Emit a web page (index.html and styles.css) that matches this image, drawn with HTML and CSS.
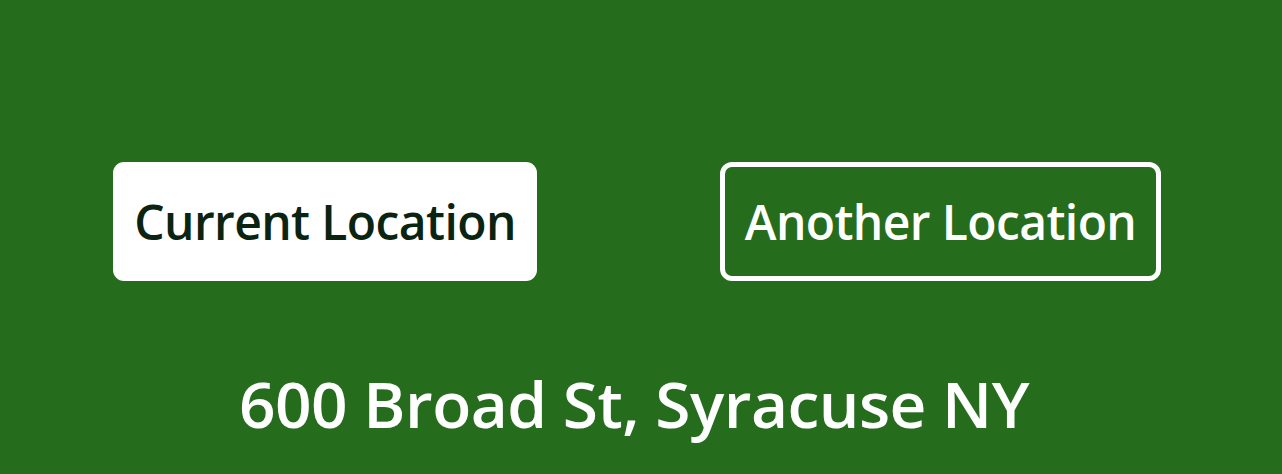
FILE: index.html
```html
<!DOCTYPE html>
<html lang="en">
<head>
<meta charset="utf-8">
<title>Location</title>
<link rel="stylesheet" href="styles.css">
</head>
<body>
<main class="screen">
  <div class="actions">
    <button class="btn btn-solid">Current Location</button>
    <button class="btn btn-outline">Another Location</button>
  </div>
  <p class="address">600 Broad St, Syracuse NY</p>
</main>
</body>
</html>
```

FILE: styles.css
```css
html, body {
  margin: 0;
  padding: 0;
  background: #266c1d;
}
.screen {
  width: 1282px;
  height: 474px;
  display: flex;
  flex-direction: column;
  font-family: "Open Sans", "Noto Sans", sans-serif;
}
.actions {
  display: flex;
  align-items: center;
  padding: 162px 0 0 113px;
  gap: 183px;
}
.btn {
  box-sizing: border-box;
  height: 119px;
  border-radius: 11px;
  font-family: inherit;
  font-size: 48px;
  font-weight: 600;
  letter-spacing: -0.6px;
  padding: 0;
  display: flex;
  align-items: center;
  justify-content: center;
  white-space: nowrap;
}
.btn-solid {
  width: 424px;
  background: #ffffff;
  color: #0b2311;
  border: none;
}
.btn-outline {
  width: 441px;
  background: transparent;
  color: #ffffff;
  border: 5px solid #ffffff;
  border-radius: 12px;
}
.address {
  margin: 91px 0 0;
  text-align: center;
  padding-right: 14px;
  color: #ffffff;
  font-size: 64px;
  font-weight: 600;
  letter-spacing: -0.5px;
  line-height: 1;
}
```
